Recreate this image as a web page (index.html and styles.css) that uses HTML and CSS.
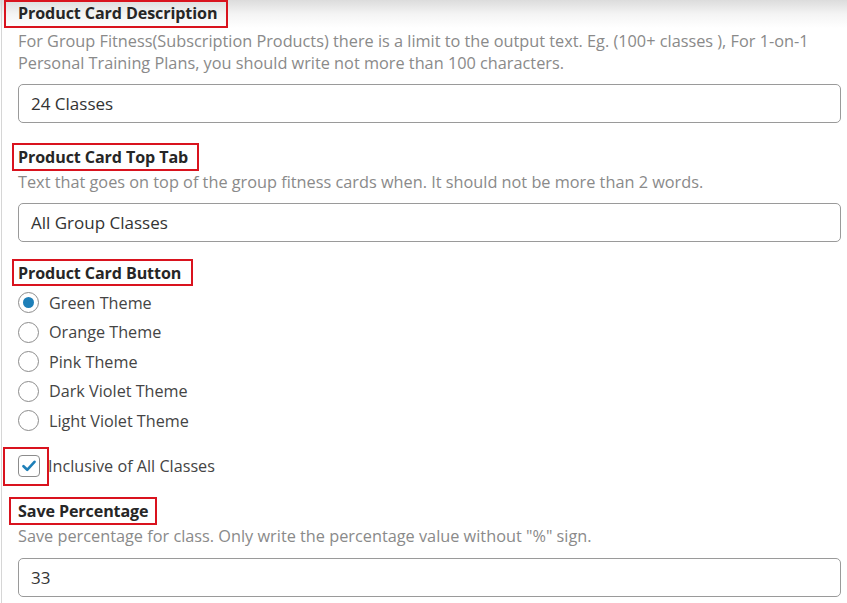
FILE: index.html
```html
<!DOCTYPE html>
<html>
<head>
<meta charset="utf-8">
<link rel="stylesheet" href="styles.css">
</head>
<body>
<div class="page">
  <div class="field f1">
    <div class="hbox hb1"><span class="heading">Product Card Description</span></div>
    <p class="desc">For Group Fitness(Subscription Products) there is a limit to the output text. Eg. (100+ classes ), For 1-on-1 Personal Training Plans, you should write not more than 100 characters.</p>
    <div class="input">24 Classes</div>
  </div>

  <div class="field f2">
    <div class="hbox hb2"><span class="heading">Product Card Top Tab</span></div>
    <p class="desc">Text that goes on top of the group fitness cards when. It should not be more than 2 words.</p>
    <div class="input">All Group Classes</div>
  </div>

  <div class="field f3">
    <div class="hbox hb3"><span class="heading">Product Card Button</span></div>
    <ul class="radios">
      <li><span class="radio checked"></span><span>Green Theme</span></li>
      <li><span class="radio"></span><span>Orange Theme</span></li>
      <li><span class="radio"></span><span>Pink Theme</span></li>
      <li><span class="radio"></span><span>Dark Violet Theme</span></li>
      <li><span class="radio"></span><span>Light Violet Theme</span></li>
    </ul>
  </div>

  <div class="check-row">
    <div class="cbox-wrap">
      <span class="cbox">
        <svg width="14" height="12" viewBox="0 0 14 12"><path d="M1.5 6.2 L5.2 9.8 L12.5 1.8" fill="none" stroke="#1e7fb8" stroke-width="2.6" stroke-linecap="round" stroke-linejoin="round"/></svg>
      </span>
    </div>
    <span class="check-label">Inclusive of All Classes</span>
  </div>

  <div class="field f4">
    <div class="hbox hb4"><span class="heading">Save Percentage</span></div>
    <p class="desc">Save percentage for class. Only write the percentage value without "%" sign.</p>
    <div class="input">33</div>
  </div>
</div>
</body>
</html>
```
FILE: styles.css
```css
* { box-sizing: border-box; }
html, body {
  margin: 0;
  padding: 0;
  background: #fff;
}
body {
  font-family: "Open Sans", "Noto Sans", sans-serif;
  color: #333;
  width: 847px;
  height: 603px;
  overflow: hidden;
  background: linear-gradient(to bottom, #dcdcdc 0px, #f4f4f4 14px, #ffffff 28px);
}
.page {
  border-left: 1px solid #d6d6d6;
  margin-left: 1px;
  height: 603px;
  padding-right: 6px;
}
.field { display: flex; flex-direction: column; }
.hbox {
  align-self: flex-start;
  border: 2px solid #d9131e;
  display: flex;
  align-items: center;
  height: 28px;
}
.heading {
  font-weight: 700;
  font-size: 16.1px;
  color: #262626;
  letter-spacing: -0.1px;
  white-space: nowrap;
}
.hb1 { margin-left: 2px; padding: 0 9px 2px 12px; }
.hb2 { margin-left: 10px; padding: 0 9px 0 4px; margin-top: 20px; }
.hb3 { margin-left: 10px; padding: 0 10px 0 4px; margin-top: 17px; height: 27px; }
.hb4 { margin-left: 7px; padding: 0 6px 0 7px; margin-top: 11px; }
.desc {
  margin: 0 0 0 16px;
  font-size: 16.3px;
  line-height: 22px;
  color: #8a8a8a;
}
.f1 .desc { margin-top: 2px; }
.input {
  margin: 10px 0 0 16px;
  height: 39px;
  border: 1px solid #9a9a9a;
  border-radius: 5px;
  padding: 0 12px;
  display: flex;
  align-items: center;
  font-size: 17px;
  color: #333;
}
.f4 .input { margin-top: 11px; }
.radios {
  list-style: none;
  margin: 2px 0 0 16px;
  padding: 0;
}
.radios li {
  display: flex;
  align-items: center;
  height: 29.5px;
  font-size: 16.2px;
  color: #444;
}
.radio {
  width: 21px;
  height: 21px;
  border: 1px solid #8c8c8c;
  border-radius: 50%;
  margin-right: 10px;
  display: flex;
  align-items: center;
  justify-content: center;
  background: #fff;
}
.radio.checked::after {
  content: "";
  width: 11px;
  height: 11px;
  border-radius: 50%;
  background: #1e7fb8;
}
.check-row {
  display: flex;
  align-items: center;
  margin-top: 11px;
}
.cbox-wrap {
  border: 2px solid #d9131e;
  width: 46px;
  height: 39px;
  margin-left: 1px;
  display: flex;
  align-items: center;
  padding-left: 13px;
}
.cbox {
  width: 22px;
  height: 22px;
  border: 1px solid #8c8c8c;
  border-radius: 4px;
  display: flex;
  align-items: center;
  justify-content: center;
}
.check-label {
  font-size: 16.2px;
  color: #444;
  margin-left: -1px;
}
```
